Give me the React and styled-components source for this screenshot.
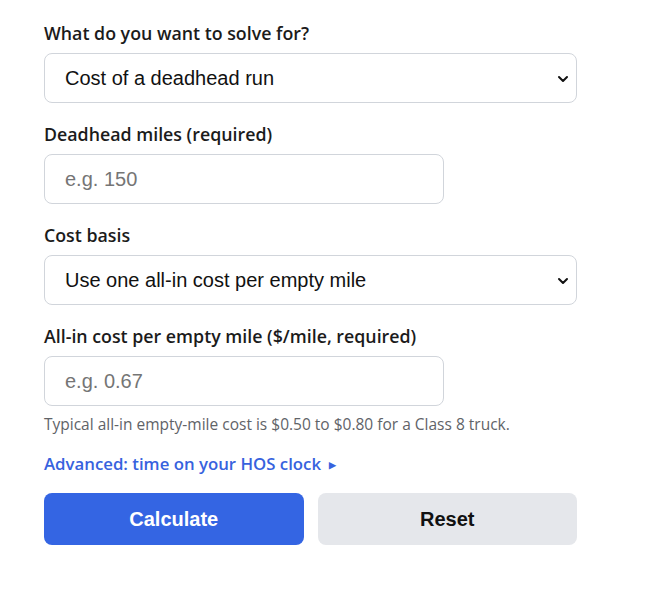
import React, { useState } from 'react';
import styled, { createGlobalStyle } from 'styled-components';

const GlobalStyle = createGlobalStyle`
    body {
        margin: 0;
        background: #ffffff;
        font-family: "Open Sans", "Noto Sans", sans-serif;
        color: #1b1b1b;
    }
`;

const Form = styled.form`
    width: 533px;
    padding: 21px 44px 40px;
`;

const Field = styled.div`
    display: flex;
    flex-direction: column;
    margin-bottom: 19px;
`;

const Label = styled.label`
    font-size: 17.8px;
    font-weight: 600;
    line-height: 24px;
    margin-bottom: 8px;
    color: #1b1b1b;
`;

const SelectWrap = styled.div`
    position: relative;
    width: 100%;
`;

const Select = styled.select`
    appearance: none;
    width: 100%;
    height: 50px;
    box-sizing: border-box;
    padding: 0 40px 0 20px;
    border: 1px solid #d1d5db;
    border-radius: 8px;
    background: #ffffff;
    font-family: "Liberation Sans", Arial, sans-serif;
    font-size: 20px;
    color: #111111;
`;

const Chevron = styled.svg`
    position: absolute;
    right: 8px;
    top: 50%;
    width: 12px;
    height: 12px;
    margin-top: -5px;
    pointer-events: none;
`;

const Input = styled.input`
    width: 400px;
    height: 50px;
    box-sizing: border-box;
    padding: 0 20px;
    border: 1px solid #d1d5db;
    border-radius: 8px;
    font-family: "Liberation Sans", Arial, sans-serif;
    font-size: 20px;
    color: #111111;

    ::placeholder {
        color: #777777;
    }
`;

const Hint = styled.p`
    margin: -11px 0 0;
    font-size: 15.5px;
    line-height: 20px;
    color: #5f6368;
`;

const Advanced = styled.details`
    margin-top: 18px;

    summary {
        list-style: none;
        cursor: pointer;
        font-size: 16.8px;
        font-weight: 600;
        line-height: 24px;
        color: #3762de;
    }
    summary::-webkit-details-marker {
        display: none;
    }
`;

const Marker = styled.span`
    font-size: 9px;
    margin-left: 8px;
    vertical-align: 2px;
`;

const Buttons = styled.div`
    display: grid;
    grid-template-columns: 1fr 1fr;
    gap: 14px;
    margin-top: 16px;
`;

const Button = styled.button`
    height: 52px;
    border: none;
    border-radius: 8px;
    font-family: "Liberation Sans", Arial, sans-serif;
    font-size: 20px;
    font-weight: 700;
    cursor: pointer;
    background: ${props => (props.primary ? '#3465e3' : '#e5e7eb')};
    color: ${props => (props.primary ? '#ffffff' : '#111111')};
`;

const Dropdown = ({ id, children, defaultValue }) => (
    <SelectWrap>
        <Select id={id} defaultValue={defaultValue}>
            {children}
        </Select>
        <Chevron viewBox="0 0 12 12">
            <path d="M2 4l4 4 4-4" fill="none" stroke="#111" strokeWidth="2" strokeLinecap="round" strokeLinejoin="round" />
        </Chevron>
    </SelectWrap>
);

export default function App() {
    const [miles, setMiles] = useState('');
    const [cost, setCost] = useState('');

    const reset = () => {
        setMiles('');
        setCost('');
    };

    return (
        <>
            <GlobalStyle />
            <Form onSubmit={e => e.preventDefault()}>
                <Field>
                    <Label htmlFor="solve">What do you want to solve for?</Label>
                    <Dropdown id="solve" defaultValue="cost">
                        <option value="cost">Cost of a deadhead run</option>
                        <option value="miles">Break-even deadhead miles</option>
                    </Dropdown>
                </Field>
                <Field>
                    <Label htmlFor="miles">Deadhead miles (required)</Label>
                    <Input id="miles" placeholder="e.g. 150" value={miles} onChange={e => setMiles(e.target.value)} />
                </Field>
                <Field>
                    <Label htmlFor="basis">Cost basis</Label>
                    <Dropdown id="basis" defaultValue="allin">
                        <option value="allin">Use one all-in cost per empty mile</option>
                        <option value="split">Break out fuel and other costs</option>
                    </Dropdown>
                </Field>
                <Field>
                    <Label htmlFor="cost">All-in cost per empty mile ($/mile, required)</Label>
                    <Input id="cost" placeholder="e.g. 0.67" value={cost} onChange={e => setCost(e.target.value)} />
                </Field>
                <Hint>Typical all-in empty-mile cost is $0.50 to $0.80 for a Class 8 truck.</Hint>
                <Advanced>
                    <summary>
                        Advanced: time on your HOS clock<Marker>▶</Marker>
                    </summary>
                </Advanced>
                <Buttons>
                    <Button primary type="submit">Calculate</Button>
                    <Button type="button" onClick={reset}>Reset</Button>
                </Buttons>
            </Form>
        </>
    );
}
